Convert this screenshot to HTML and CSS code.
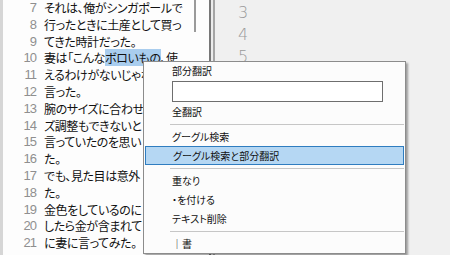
FILE: index.html
```html
<!DOCTYPE html>
<html lang="ja">
<head>
    <meta charset="UTF-8">
    <title>Editor Context Menu</title>
    <link rel="stylesheet" href="styles.css">
</head>
<body>
    <div class="window">
        <div class="editor">
            <div class="gutter" id="gutter"></div>
            <div class="lines" id="lines"></div>
            <div class="guide"></div>
        </div>
        <div class="splitter"></div>
        <div class="side">
            <div class="side-num">3</div>
            <div class="side-num">4</div>
            <div class="side-num">5</div>
        </div>

        <div class="menu">
            <div class="menu-item">部分翻訳</div>
            <input class="menu-input" type="text">
            <div class="menu-item">全翻訳</div>
            <div class="menu-sep"></div>
            <div class="menu-item">グーグル検索</div>
            <div class="menu-item active">グーグル検索と部分翻訳</div>
            <div class="menu-sep"></div>
            <div class="menu-item">重なり</div>
            <div class="menu-item">・を付ける</div>
            <div class="menu-item">テキスト削除</div>
            <div class="menu-sep"></div>
            <div class="menu-item">｜書</div>
        </div>
    </div>

    <script>
        const lines = [
            'それは、俺がシンガポールで',
            '行ったときに土産として買っ',
            'てきた時計だった。',
            '妻は「こんな<span class="sel">ボロいもの</span>、使',
            'えるわけがないじゃない',
            '言った。',
            '腕のサイズに合わせ',
            'ズ調整もできないと',
            '言っていたのを思い',
            'た。',
            'でも、見た目は意外',
            'た。',
            '金色をしているのに',
            'したら金が含まれて',
            'に妻に言ってみた。'
        ];

        document.getElementById('gutter').innerHTML =
            lines.map((_, i) => `<div class="num">${i + 7}</div>`).join('');
        document.getElementById('lines').innerHTML =
            lines.map(text => `<div class="line">${text}</div>`).join('');
    </script>
</body>
</html>
```

FILE: styles.css
```css
* {
    margin: 0;
    padding: 0;
    box-sizing: border-box;
}

body {
    width: 450px;
    height: 255px;
    overflow: hidden;
    background-color: #f0f0f0;
    font-family: "Noto Sans CJK JP", sans-serif;
}

.window {
    position: relative;
    display: flex;
    height: 255px;
}

.editor {
    position: relative;
    display: flex;
    width: 211px;
    height: 100%;
    background-color: #fdfdfd;
    border-left: 3px solid #d6d6d6;
    border-right: 2px solid #777777;
}

.gutter {
    width: 33px;
    text-align: right;
    font-family: "Liberation Sans", sans-serif;
    font-size: 13px;
    letter-spacing: -1px;
    color: #8f8f8f;
}

.num,
.line {
    height: 16.8px;
    line-height: 16.8px;
}

.lines {
    width: 158px;
    padding-left: 8px;
    overflow: hidden;
    white-space: nowrap;
    font-size: 12px;
    font-feature-settings: "palt";
    letter-spacing: -0.4px;
    color: #111111;
}

.sel {
    background-color: #a9cdee;
}

.guide {
    position: absolute;
    left: 191px;
    top: 0;
    width: 2px;
    height: 32px;
    background-color: #9a9a9a;
}

.splitter {
    width: 2px;
    background-color: #ececec;
}

.side {
    flex: 1;
    border-left: 2px solid #a5a5a5;
    padding: 2px 0 0 23px;
}

.side-num {
    height: 22px;
    line-height: 22px;
    font-family: "DejaVu Sans", sans-serif;
    font-size: 16px;
    font-weight: 300;
    color: #9a9a9a;
}

/* context menu */
.menu {
    position: absolute;
    left: 143px;
    top: 61px;
    width: 263px;
    background-color: #fcfcfc;
    border: 1px solid #8c8c8c;
    box-shadow: 2px 2px 2px rgba(0, 0, 0, 0.35);
    font-size: 10px;
    font-feature-settings: "palt";
    color: #111111;
}

.menu-item {
    height: 19px;
    line-height: 19px;
    padding-left: 28px;
}

.menu-item:first-child {
    height: 18px;
    line-height: 18px;
}

.menu-item.active {
    margin: 0 1px;
    padding-left: 27px;
    line-height: 17px;
    background-color: #b5d7f3;
    border: 1px solid #2f7dc0;
}

.menu-input {
    display: block;
    width: 211px;
    height: 21px;
    margin: 1px 0 0 28px;
    border: 1px solid #6e6e6e;
    background-color: #ffffff;
    outline: none;
}

.menu-sep {
    height: 1px;
    margin: 3px 1px 2px 26px;
    background-color: #c6c6c6;
}
```
